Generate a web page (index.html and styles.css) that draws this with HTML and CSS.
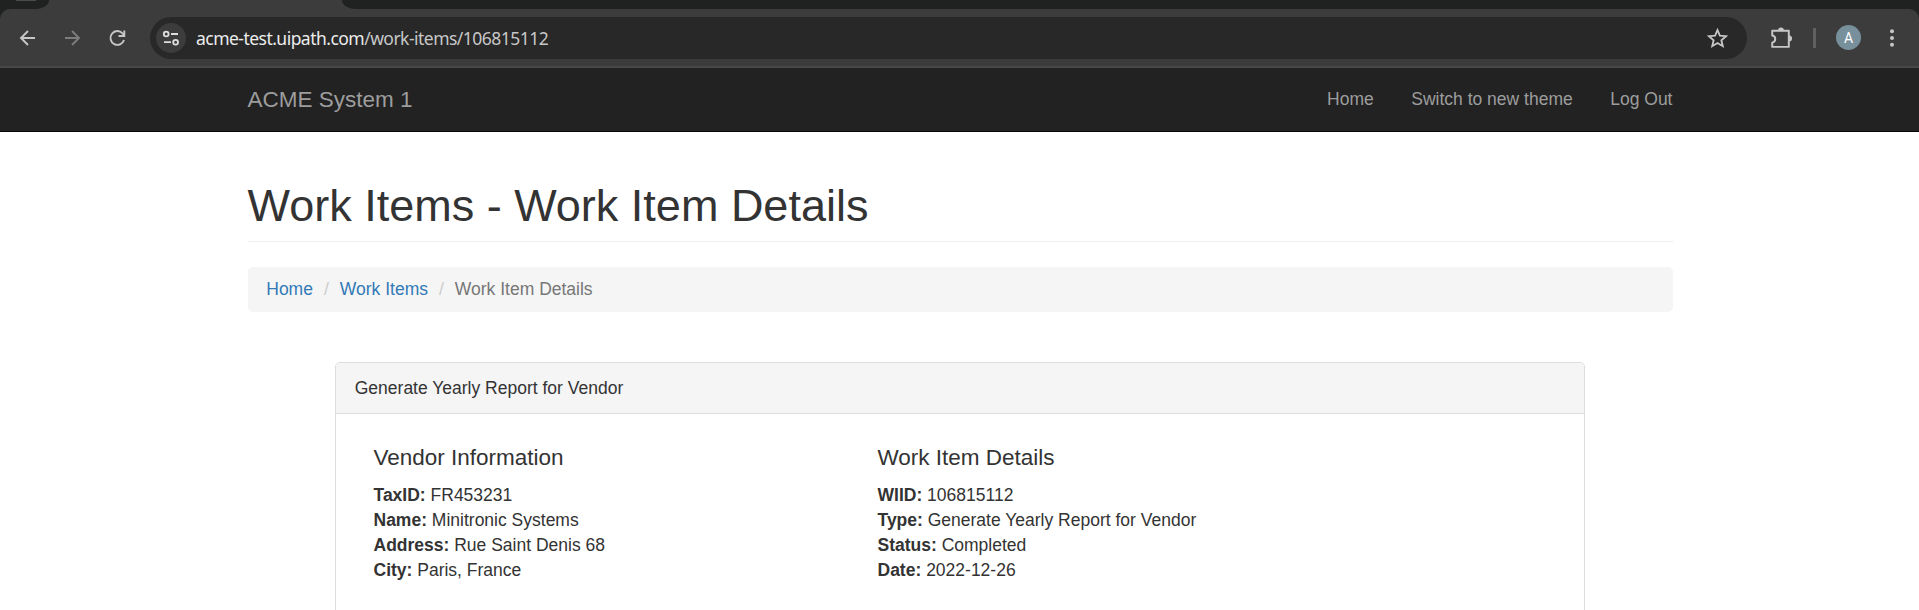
FILE: index.html
```html
<!DOCTYPE html>
<html lang="en">
<head>
<meta charset="utf-8">
<title>ACME System 1 - Work Item Details</title>
<link rel="stylesheet" href="styles.css">
</head>
<body>
<header class="browser">
  <div class="tabstrip">
    <div class="tab-prev"><span class="tab-icon"></span></div>
    <div class="tab-rest"></div>
  </div>
  <div class="toolbar">
    <svg class="tool back" width="24" height="24" viewBox="0 0 24 24" fill="none" stroke="#c7c7c7" stroke-width="1.9"><path d="M19 12H5.500M12 5l-7 7 7 7"/></svg>
    <svg class="tool forward" width="24" height="24" viewBox="0 0 24 24" fill="none" stroke="#7c7c7c" stroke-width="1.9"><path d="M5 12h13.500M12 5l7 7-7 7"/></svg>
    <svg class="tool reload" width="24" height="24" viewBox="0 0 24 24" fill="none" stroke="#c7c7c7" stroke-width="1.9"><path d="M19 14a6.900 6.900 0 1 1-1.500-6.700l1.600 1.900"/><path d="M19.300 4.500v5.500h-5.800"/></svg>
    <div class="omnibox">
      <span class="site-info"><svg width="20" height="20" viewBox="0 0 20 20" fill="none" stroke="#dedede" stroke-width="1.8"><circle cx="5.200" cy="6" r="2.400"/><path d="M10 6h7M3 14.200h7"/><circle cx="14.600" cy="14.200" r="2.400"/></svg></span>
      <span class="url"><span class="host">acme-test.uipath.com</span>/work-items/106815112</span>
      <svg class="star" width="25" height="25" viewBox="0 0 22 22" fill="none" stroke="#c7c7c7" stroke-width="1.6"><path d="M11 3.500l2.100 5 5.400.45-4.100 3.550 1.250 5.250L11 14.950 6.350 17.750l1.250-5.250L3.500 8.950l5.400-.45z"/></svg>
    </div>
    <svg class="tool ext" width="26" height="26" viewBox="0 0 24 24"><path d="M4.200 5.300H19.200V20.200H3.900V16.300C7.600 15.600 7.600 10.400 3.900 9.700V5.300z" fill="none" stroke="#c7c7c7" stroke-width="1.800" stroke-linejoin="round"/><path d="M9.300 5a2.700 2.700 0 0 1 5.400 0zM19.500 9.800a2.700 2.700 0 0 1 0 5.400z" fill="#c7c7c7"/></svg>
    <span class="divider"></span>
    <span class="avatar">A</span>
    <svg class="tool menu" width="6" height="20" viewBox="0 0 6 20" fill="#c7c7c7"><circle cx="3" cy="3.200" r="2"/><circle cx="3" cy="10" r="2"/><circle cx="3" cy="16.800" r="2"/></svg>
  </div>
</header>
<nav class="navbar">
  <div class="container nav-inner">
    <a class="brand">ACME System 1</a>
    <div class="nav-links"><a>Home</a><a>Switch to new theme</a><a>Log Out</a></div>
  </div>
</nav>
<main class="container">
  <h1 class="page-header">Work Items - Work Item Details</h1>
  <ol class="breadcrumb">
    <li><a>Home</a></li>
    <li><a>Work Items</a></li>
    <li>Work Item Details</li>
  </ol>
  <section class="panel">
    <div class="panel-heading">Generate Yearly Report for Vendor</div>
    <div class="panel-body">
      <div class="col">
        <h4>Vendor Information</h4>
        <p><strong>TaxID:</strong> FR453231<br><strong>Name:</strong> Minitronic Systems<br><strong>Address:</strong> Rue Saint Denis 68<br><strong>City:</strong> Paris, France</p>
      </div>
      <div class="col">
        <h4>Work Item Details</h4>
        <p><strong>WIID:</strong> 106815112<br><strong>Type:</strong> Generate Yearly Report for Vendor<br><strong>Status:</strong> Completed<br><strong>Date:</strong> 2022-12-26</p>
      </div>
    </div>
  </section>
</main>
</body>
</html>
```
FILE: styles.css
```css
* { box-sizing: border-box; }
html { height: 100%; }
body {
  display: flex;
  flex-direction: column;
  height: 100%;
  margin: 0;
  background: #fff;
  color: #333;
  font: 17.5px/25px "Liberation Sans", Arial, sans-serif;
}
svg { display: block; flex: none; }

.browser { background: #1f2220; }
.tabstrip { display: flex; justify-content: space-between; height: 9px; background: #3c3c3c; }
.tab-prev { width: 49px; background: #1f2220; border-bottom-right-radius: 13px 9px; }
.tab-icon { display: block; width: 20px; height: 1px; margin-left: 16px; background: #4a4c4b; }
.tab-rest { width: 1577px; background: #1f2220; border-bottom-left-radius: 13px 9px; }
.toolbar {
  display: flex;
  align-items: center;
  height: 59px;
  padding: 1px 24px 0 15.5px;
  background: #3c3c3c;
  border-bottom: 2px solid #484848;
  border-radius: 10px 10px 0 0;
}
.tool { margin-bottom: 1px; }
.forward { margin-left: 20.5px; }
.reload { margin-left: 21px; }
.omnibox {
  display: flex;
  align-items: center;
  width: 1597px;
  height: 42px;
  margin-left: 21px;
  padding: 0 17px 0 6px;
  border-radius: 21px;
  background: #282828;
}
.site-info { display: flex; align-items: center; justify-content: center; width: 30px; height: 30px; border-radius: 50%; background: #3c3c3c; }
.url { margin-left: 10px; color: #c7c7c7; font: 17.5px/24px "Noto Sans", "Open Sans", sans-serif; letter-spacing: -0.53px; white-space: nowrap; }
.host { color: #ececec; }
.star { margin-left: auto; }
.ext { margin-left: 21px; }
.divider { width: 2.5px; height: 20px; margin: 0 0 1px 19px; background: #5f6060; }
.avatar {
  width: 25px;
  height: 25px;
  margin: 0 0 1px 20.5px;
  border-radius: 50%;
  background: #78909c;
  color: #fff;
  font: 14px/26px Roboto, sans-serif;
  text-align: center;
}
.menu { margin-left: auto; }

.container { width: 1425px; margin-left: 247.5px; }
.navbar { height: 64px; background: #222; border-bottom: 1px solid #080808; }
.nav-inner { display: flex; align-items: center; justify-content: space-between; height: 62px; color: #9d9d9d; }
.brand { font-size: 22.5px; }
.nav-links { display: flex; gap: 37.5px; }

main { display: flex; flex: 1; flex-direction: column; min-height: 0; }
.page-header { flex: none; height: 74px; margin: 36px 0 25px; padding: 12.5px 0 11px; border-bottom: 1px solid #eee; font-size: 45px; line-height: 49.5px; font-weight: 400; }
.breadcrumb { display: flex; flex: none; height: 45px; margin: 0; padding: 9.5px 18.75px; border-radius: 5px; background: #f5f5f5; list-style: none; color: #777; }
.breadcrumb a { color: #337ab7; }
.breadcrumb li + li::before { content: "/"; padding: 0 11px; color: #ccc; }
.panel { flex: 1; width: 1250px; min-height: 0; margin: 50px 0 0 87.5px; border: 1px solid #ddd; border-bottom: 0; border-radius: 5px 5px 0 0; }
.panel-heading { height: 51px; padding: 12.5px 18.75px; border-bottom: 1px solid #ddd; border-radius: 4px 4px 0 0; background: #f5f5f5; }
.panel-body { display: grid; grid-template-columns: 504px 1fr; padding: 31px 37.5px 0; }
h4 { margin: 0 0 12.5px; font-size: 22.5px; line-height: 25px; font-weight: 400; }
p { margin: 0; }
```
